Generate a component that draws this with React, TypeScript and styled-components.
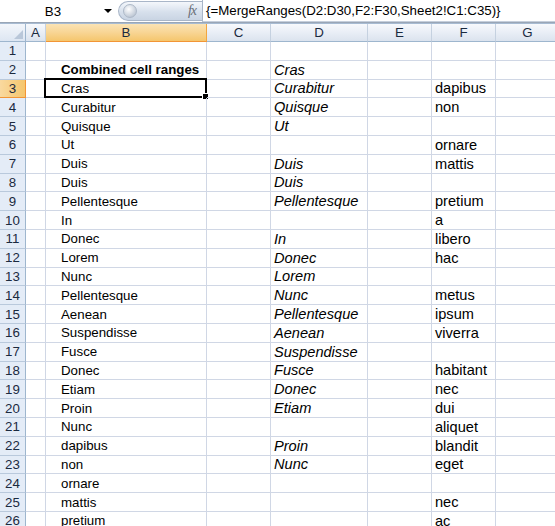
import styled, { createGlobalStyle } from 'styled-components';

const GlobalStyle = createGlobalStyle`
	html, body {
		margin: 0;
		padding: 0;
		background: #ffffff;
		font-family: 'Liberation Sans', Arial, sans-serif;
		overflow: hidden;
	}
`;

const COLS = ['A', 'B', 'C', 'D', 'E', 'F', 'G'];
const ROW_H = 18.8;

type Row = { b?: string; d?: string; f?: string; bold?: boolean };

const rows: Row[] = [
	{},
	{ b: 'Combined cell ranges', d: 'Cras', bold: true },
	{ b: 'Cras', d: 'Curabitur', f: 'dapibus' },
	{ b: 'Curabitur', d: 'Quisque', f: 'non' },
	{ b: 'Quisque', d: 'Ut' },
	{ b: 'Ut', f: 'ornare' },
	{ b: 'Duis', d: 'Duis', f: 'mattis' },
	{ b: 'Duis', d: 'Duis' },
	{ b: 'Pellentesque', d: 'Pellentesque', f: 'pretium' },
	{ b: 'In', f: 'a' },
	{ b: 'Donec', d: 'In', f: 'libero' },
	{ b: 'Lorem', d: 'Donec', f: 'hac' },
	{ b: 'Nunc', d: 'Lorem' },
	{ b: 'Pellentesque', d: 'Nunc', f: 'metus' },
	{ b: 'Aenean', d: 'Pellentesque', f: 'ipsum' },
	{ b: 'Suspendisse', d: 'Aenean', f: 'viverra' },
	{ b: 'Fusce', d: 'Suspendisse' },
	{ b: 'Donec', d: 'Fusce', f: 'habitant' },
	{ b: 'Etiam', d: 'Donec', f: 'nec' },
	{ b: 'Proin', d: 'Etiam', f: 'dui' },
	{ b: 'Nunc', f: 'aliquet' },
	{ b: 'dapibus', d: 'Proin', f: 'blandit' },
	{ b: 'non', d: 'Nunc', f: 'eget' },
	{ b: 'ornare' },
	{ b: 'mattis', f: 'nec' },
	{ b: 'pretium', f: 'ac' },
];

const Window = styled.div`
	width: 555px;
	height: 526px;
	overflow: hidden;
	background: #ffffff;
`;

const FormulaBar = styled.div`
	display: flex;
	height: 22px;
	background: #ffffff;
`;

const NameBox = styled.div`
	position: relative;
	width: 118px;
	display: flex;
	align-items: center;
	justify-content: center;
	padding-right: 12px;
	box-sizing: border-box;
	font-size: 13.3px;
	color: #000;
`;

const DropArrow = styled.span`
	position: absolute;
	right: 6px;
	top: 9px;
	width: 0;
	height: 0;
	border-left: 4px solid transparent;
	border-right: 4px solid transparent;
	border-top: 4px solid #000;
`;

const Capsule = styled.div`
	width: 84px;
	margin: 1px 0;
	display: flex;
	align-items: center;
	justify-content: space-between;
	padding: 0 6px 0 4px;
	box-sizing: border-box;
	border: 1px solid #a9b6c8;
	border-right: none;
	border-radius: 11px 0 0 11px;
	background: linear-gradient(#f4f7fb, #d7e0ec 55%, #c9d4e3);
`;

const Knob = styled.span`
	width: 12px;
	height: 12px;
	border-radius: 50%;
	background: radial-gradient(circle at 40% 35%, #ffffff, #c3ccd8 70%, #9aa7b8);
	border: 1px solid #aeb9c8;
`;

const Fx = styled.span`
	font-family: 'Liberation Serif', 'Times New Roman', serif;
	font-style: italic;
	font-size: 14px;
	color: #6a6f78;
	letter-spacing: -1px;
`;

const FormulaText = styled.div`
	flex: 1;
	display: flex;
	align-items: center;
	padding-left: 3px;
	border-left: 1px solid #a9b6c8;
	border-bottom: 1px solid #c5cfdc;
	font-size: 13.3px;
	color: #000;
	white-space: nowrap;
`;

const Separator = styled.div`
	border-top: 1px solid #9aa6b6;
	border-bottom: 1px solid #a7bbd2;
`;

const Grid = styled.div`
	display: grid;
	grid-template-columns: 26px 20px 161px 64px 97px 64px 64px 64px;
	grid-template-rows: 18px repeat(${rows.length}, ${ROW_H}px);
`;

const Corner = styled.div`
	position: relative;
	background: linear-gradient(#f3f6fb, #dde6f2);
	border-right: 1px solid #9eb6ce;
	border-bottom: 1px solid #9eb6ce;
	box-sizing: border-box;

	&::after {
		content: '';
		position: absolute;
		right: 2px;
		bottom: 2px;
		width: 0;
		height: 0;
		border-left: 9px solid transparent;
		border-bottom: 9px solid #b9c7d9;
	}
`;

const ColHead = styled.div<{ $active?: boolean }>`
	display: flex;
	align-items: center;
	justify-content: center;
	box-sizing: border-box;
	font-size: 13.3px;
	color: #1b2a3f;
	background: ${(p) =>
		p.$active
			? 'linear-gradient(#fbe3b4, #f8d594 50%, #f5c66d)'
			: 'linear-gradient(#f7f9fc, #e9eef6 50%, #dbe3ee)'};
	border-right: 1px solid ${(p) => (p.$active ? '#f2a63f' : '#c5d1e0')};
	border-bottom: 1px solid ${(p) => (p.$active ? '#f29536' : '#9eb6ce')};
`;

const RowHead = styled.div<{ $active?: boolean }>`
	display: flex;
	align-items: center;
	justify-content: center;
	box-sizing: border-box;
	font-size: 13.3px;
	color: #1b2a3f;
	background: ${(p) => (p.$active ? 'linear-gradient(90deg, #f9d99f, #f5c66d)' : '#e4ecf7')};
	border-right: 1px solid ${(p) => (p.$active ? '#f29536' : '#9eb6ce')};
	border-bottom: 1px solid ${(p) => (p.$active ? '#f29536' : '#b9c9dc')};
`;

const Cell = styled.div<{ $indent?: number; $italic?: boolean; $bold?: boolean; $large?: boolean }>`
	position: relative;
	display: flex;
	align-items: center;
	box-sizing: border-box;
	padding-left: ${(p) => p.$indent ?? 3}px;
	border-right: 1px solid #d0d7e5;
	border-bottom: 1px solid #d0d7e5;
	font-size: ${(p) => (p.$large ? '14.6px' : '13.3px')};
	font-style: ${(p) => (p.$italic ? 'italic' : 'normal')};
	font-weight: ${(p) => (p.$bold ? 'bold' : 'normal')};
	color: #000;
	white-space: nowrap;
`;

const Selection = styled.div`
	position: absolute;
	left: -2px;
	top: -2px;
	right: -1px;
	bottom: -1px;
	border: 2px solid #000;
	pointer-events: none;

	&::after {
		content: '';
		position: absolute;
		right: -4px;
		bottom: -4px;
		width: 5px;
		height: 5px;
		background: #000;
		border: 1px solid #fff;
	}
`;

const App = () => {
	return (
		<Window>
			<GlobalStyle />
			<FormulaBar>
				<NameBox>
					B3
					<DropArrow />
				</NameBox>
				<Capsule>
					<Knob />
					<Fx>fx</Fx>
				</Capsule>
				<FormulaText>{'{=MergeRanges(D2:D30,F2:F30,Sheet2!C1:C35)}'}</FormulaText>
			</FormulaBar>
			<Separator />
			<Grid>
				<Corner />
				{COLS.map((c) => (
					<ColHead key={c} $active={c === 'B'}>
						{c}
					</ColHead>
				))}
				{rows.map((r, i) => {
					const n = i + 1;
					return [
						<RowHead key={`h${n}`} $active={n === 3}>
							{n}
						</RowHead>,
						<Cell key={`a${n}`} />,
						<Cell key={`b${n}`} $indent={15} $bold={r.bold}>
							{r.b}
							{n === 3 && <Selection />}
						</Cell>,
						<Cell key={`c${n}`} />,
						<Cell key={`d${n}`} $italic $large>
							{r.d}
						</Cell>,
						<Cell key={`e${n}`} />,
						<Cell key={`f${n}`} $large>
							{r.f}
						</Cell>,
						<Cell key={`g${n}`} />,
					];
				})}
			</Grid>
		</Window>
	);
};

export default App;
